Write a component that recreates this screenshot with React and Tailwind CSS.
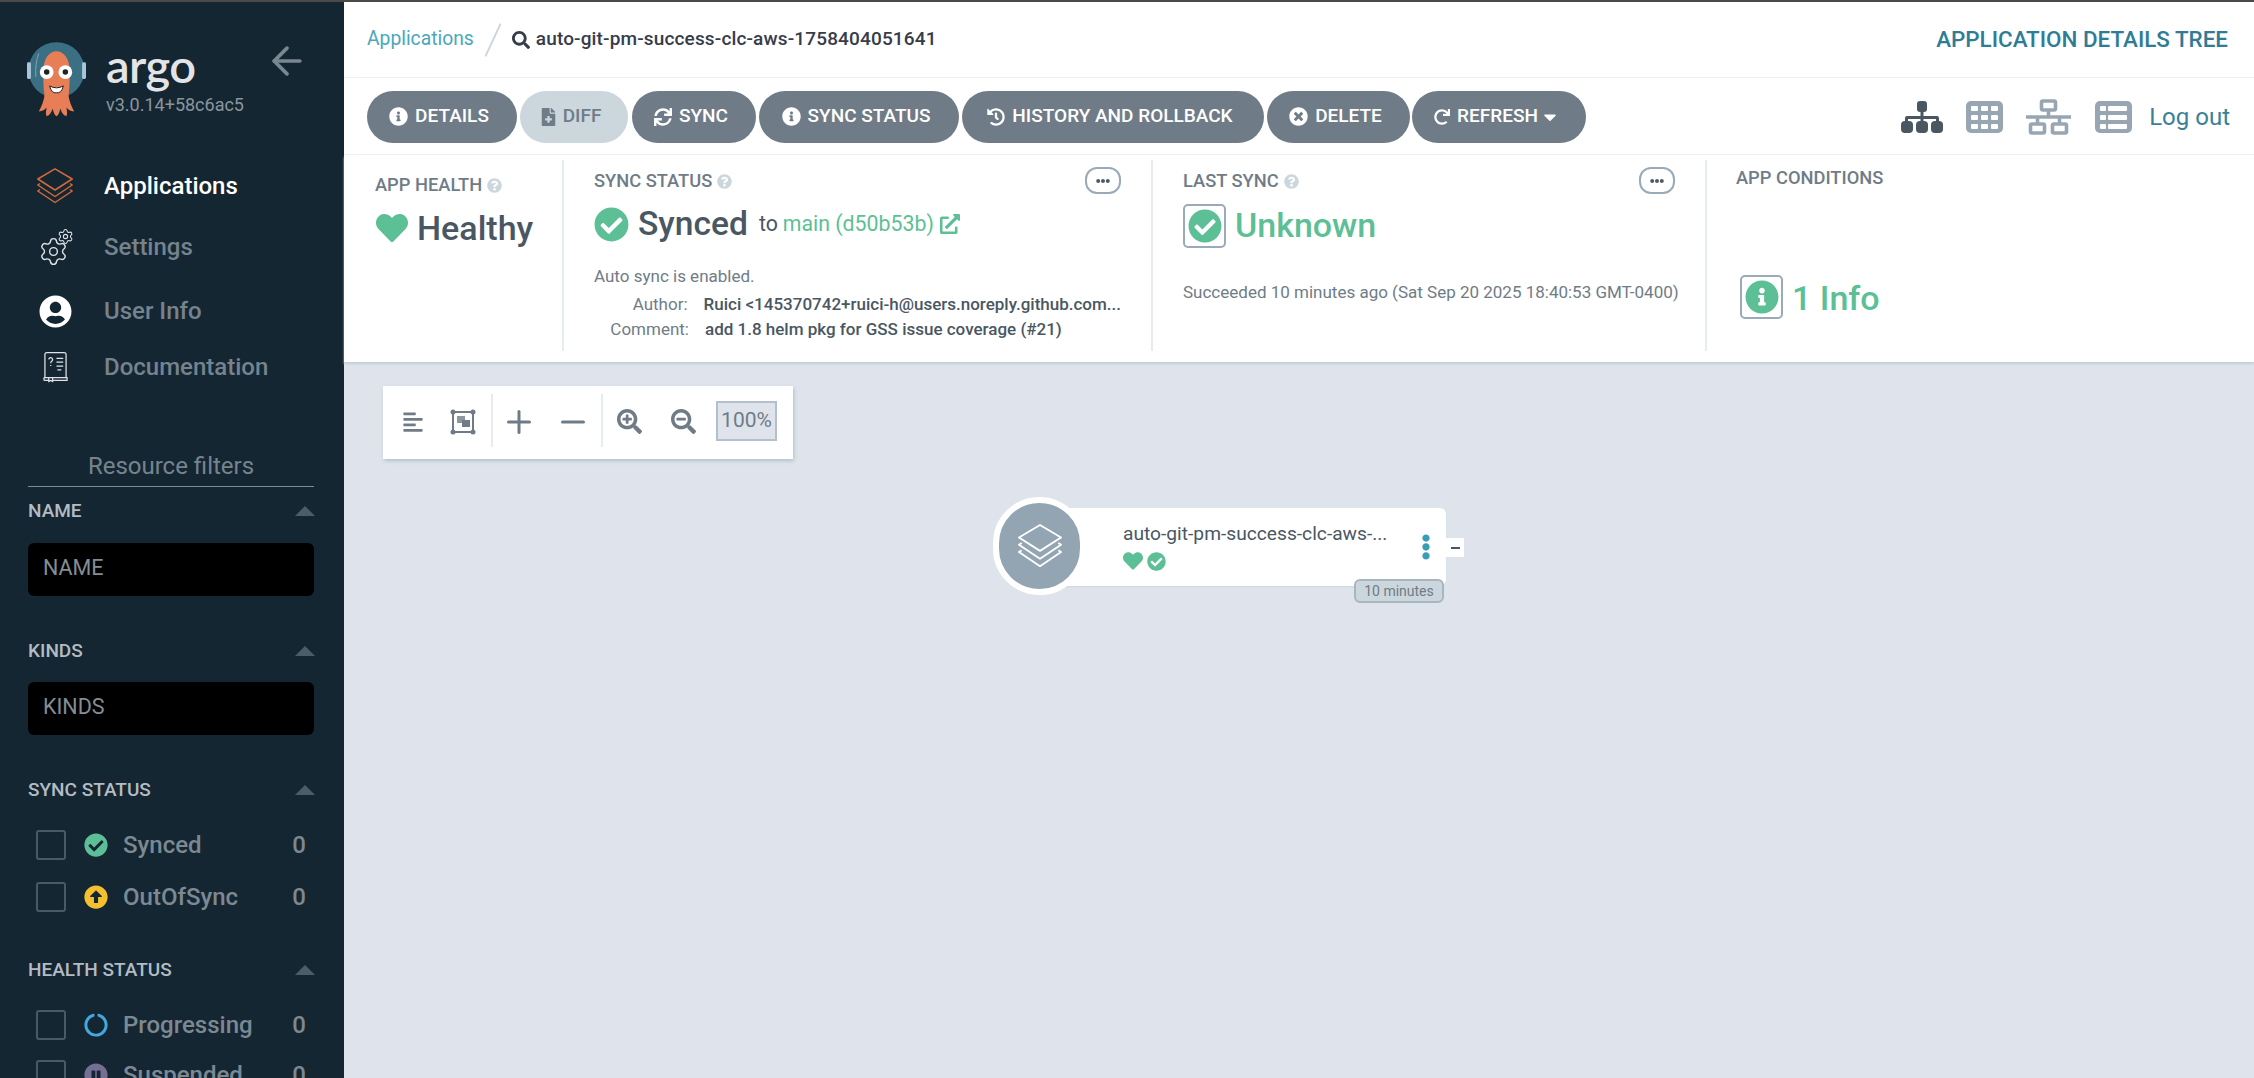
import React from 'react';
import { FaInfoCircle, FaFileMedical, FaSync, FaHistory, FaTimesCircle, FaRedo, FaCaretDown, FaSearch, FaExternalLinkAlt, FaHeart, FaCheckCircle, FaArrowAltCircleUp, FaPauseCircle, FaCircleNotch, FaUserCircle, FaEllipsisH, FaEllipsisV, FaQuestionCircle, FaSearchPlus, FaSearchMinus, FaAlignLeft } from 'react-icons/fa';
import { Settings, ArrowLeft, Plus, Minus } from 'lucide-react';

function Stack({ className, stroke }) {
  return (
    <svg viewBox="0 0 36 36" className={className} fill="none" stroke={stroke} strokeWidth="1.5" strokeLinejoin="round">
      <path d="M3 21.5 0.8 23 18 34.5 35.2 23 33 21.5" />
      <path d="M3 15.5 0.8 17 18 28.5 35.2 17 33 15.5" />
      <path d="M18 0.8 35.2 11 18 22 0.8 11Z" />
    </svg>
  );
}

function Logo() {
  return (
    <svg viewBox="0 0 60 76" className="w-[59px] h-[76px] shrink-0">
      <circle cx="30" cy="29" r="28.5" fill="#3b6f84" />
      <path d="M12 12Q8 22 9 36" fill="none" stroke="#7fa6b8" strokeWidth="1" />
      <rect x="0" y="21" width="4" height="17" rx="1.5" fill="#a9c6d8" />
      <rect x="56" y="21" width="4" height="17" rx="1.5" fill="#a9c6d8" />
      <path d="M16.5 30C16.5 3 43.5 3 43.5 30C43.5 42 43 50 42 56H18C17 50 16.5 42 16.5 30Z" fill="#e77e56" />
      <path d="M18 54C17 60 15 66 12 71C16 71 18 69 20 67C19 71 19 74 20 76C23 75 25 72 26 68C27 72 28 75 30 76C32 75 33 72 34 68C35 72 37 75 40 76C41 74 41 71 40 67C42 69 44 71 48 71C45 66 43 60 42 54Z" fill="#e77e56" />
      <circle cx="20" cy="31" r="7" fill="#fff" /><circle cx="39" cy="31" r="7" fill="#fff" />
      <circle cx="20" cy="31" r="2.8" fill="#222" /><circle cx="39" cy="31" r="2.8" fill="#222" />
      <path d="M23 45Q30 49 37 45Q35 53 30 52Q25 53 23 45Z" fill="#fff" stroke="#222" strokeWidth="1" />
    </svg>
  );
}

function BookIcon() {
  return (
    <svg viewBox="0 0 26 32" className="w-[25px] h-[32px]" fill="none" stroke="#dfe3e6" strokeWidth="1.3">
      <path d="M2 27V3a2 2 0 0 1 2-2h18a2 2 0 0 1 2 2v24" />
      <path d="M1 27h24v3H10M6 27v4l2-1 2 1v-4M6 30H2a1 1 0 0 1-1-1v-2" />
      <path d="M14 7h7M14 11h7M14 15h7M15 19h4" />
      <path d="M6 8a2 2 0 1 1 3 2c-1 .6-1 1-1 2M8 14v1" />
    </svg>
  );
}

function TreeIcon() {
  return (
    <svg viewBox="0 0 42 32" className="w-[42px] h-[32px]" fill="#495763">
      <rect x="16" y="0" width="10" height="11" rx="3" />
      <rect x="0" y="20" width="12" height="12" rx="4" />
      <rect x="15" y="20" width="12" height="12" rx="4" />
      <rect x="30" y="20" width="12" height="12" rx="4" />
      <path d="M19.5 10h3v5H36a2 2 0 0 1 2 2v4h-3v-3H22.5v3h-3v-3H7v3H4v-4a2 2 0 0 1 2-2h13.5z" />
    </svg>
  );
}

function GridIcon({ wide }) {
  const rows = [5, 14, 23];
  return (
    <svg viewBox="0 0 37 32" className="w-[37px] h-[32px]">
      <rect width="37" height="32" rx="5" fill="#98a6b3" />
      {rows.map((y) => wide ? (
        <g key={y} fill="#fff"><rect x="5" y={y} width="6" height="5" rx="1" /><rect x="13" y={y} width="19" height="5" rx="1" /></g>
      ) : (
        <g key={y} fill="#fff"><rect x="5" y={y} width="7" height="5" rx="1" /><rect x="15" y={y} width="7" height="5" rx="1" /><rect x="25" y={y} width="7" height="5" rx="1" /></g>
      ))}
    </svg>
  );
}

function NetIcon() {
  return (
    <svg viewBox="0 0 45 36" className="w-[45px] h-[36px]" fill="none" stroke="#98a6b3" strokeWidth="3.6" strokeLinejoin="round">
      <rect x="15.5" y="2" width="14" height="9" rx="1.5" />
      <rect x="4.5" y="25" width="14" height="9" rx="1.5" />
      <rect x="26.5" y="25" width="14" height="9" rx="1.5" />
      <path d="M22.5 11v7M0 18h45M11.5 18v7M33.5 18v7" />
    </svg>
  );
}

function Nav({ icon, label, active, className }) {
  return (
    <div className={`flex items-center h-[40px] ${className}`}>
      <div className="w-[36px] ml-[37px] mr-[31px] flex justify-center shrink-0">{icon}</div>
      <span className={`text-[24px] font-medium ${active ? 'text-white' : 'text-[#75838e]'}`}>{label}</span>
    </div>
  );
}

function FilterHead({ label, className }) {
  return (
    <div className={`flex items-center justify-between h-[20px] ${className}`}>
      <span className="text-[19px] font-medium text-[#b3bcc3] whitespace-nowrap">{label}</span>
      <span className="w-0 h-0 border-x-[10px] border-x-transparent border-b-[10px] border-b-[#4d5c69] mr-[-1px]" />
    </div>
  );
}

function FilterInput({ label, className }) {
  return (
    <div className={`h-[53px] rounded-[6px] bg-black flex items-center px-[15px] pb-[2px] text-[21.5px] text-[#848d93] ${className}`}>{label}</div>
  );
}

function FilterRow({ icon, label, className }) {
  return (
    <div className={`flex items-center h-[30px] pl-[8px] ${className}`}>
      <span className="w-[30px] h-[30px] rounded-[3px] border-2 border-[#4a5965] shrink-0" />
      <span className="w-[24px] ml-[18px] mr-[15px] flex justify-center shrink-0">{icon}</span>
      <span className="text-[24px] font-medium text-[#7c8992] grow whitespace-nowrap">{label}</span>
      <span className="text-[24px] font-medium text-[#7c8992] mr-[8px]">0</span>
    </div>
  );
}

function Btn({ icon, label, disabled, className, after }) {
  return (
    <div className={`h-[52px] rounded-[26px] flex items-center justify-center gap-[7px] pr-[6px] text-[19px] font-medium whitespace-nowrap ${disabled ? 'bg-[#ccd6dd] text-[#6f7c87]' : 'bg-[#6f7c87] text-white'} ${className}`}>
      {icon}<span>{label}</span>{after}
    </div>
  );
}

function More() {
  return (
    <div className="w-[36px] h-[27px] rounded-[12px] border-2 border-[#9aaab8] flex items-center justify-center text-[#4f5b66]">
      <FaEllipsisH className="w-[14px] h-[14px]" />
    </div>
  );
}

function Label({ children, help, className }) {
  return (
    <div className={`flex items-center h-[20px] gap-[5px] text-[18.3px] font-medium text-[#6f7c87] whitespace-nowrap ${className}`}>
      <span>{children}</span>
      {help && <FaQuestionCircle className="w-[15px] h-[15px] text-[#ccd6dd]" />}
    </div>
  );
}

const green = '#5cbf95';

export default function App() {
  return (
    <div className="w-[2254px] h-[1078px] overflow-hidden font-[Roboto,sans-serif] flex flex-col bg-white">
      <div className="h-[2px] bg-[#4a4a4a] shrink-0" />
      <div className="flex grow min-h-0">
        <aside className="w-[344px] shrink-0 bg-[#152633] px-0 overflow-hidden">
          <div className="flex h-[90px] mt-[39px] pl-[27px]">
            <Logo />
            <div className="ml-[20px] w-[150px]">
              <div className="text-[47px] leading-[48px] font-semibold font-[Lato,sans-serif] text-[#e2e4e6] h-[52px] tracking-[-0.5px]">argo</div>
              <div className="text-[18px] leading-[20px] text-[#8a959d] mt-[2px] whitespace-nowrap">v3.0.14+58c6ac5</div>
            </div>
            <ArrowLeft className="w-[44px] h-[44px] text-[#7a8791] ml-[9px] mt-[-2px] shrink-0" strokeWidth={2} />
          </div>
          <Nav className="mt-[35px]" active label="Applications" icon={<Stack className="w-[36px] h-[36px]" stroke="#d2693b" />} />
          <Nav className="mt-[21px]" label="Settings" icon={
            <span className="relative w-[34px] h-[34px] block">
              <Settings className="absolute left-[0px] bottom-[-3px] w-[31px] h-[31px] text-[#dfe3e6]" strokeWidth={1.1} />
              <Settings className="absolute right-[-2px] top-[-2px] w-[17px] h-[17px] text-[#dfe3e6]" strokeWidth={1.5} />
            </span>} />
          <Nav className="mt-[24px]" label="User Info" icon={<FaUserCircle className="w-[33px] h-[33px] text-white" />} />
          <Nav className="mt-[16px]" label="Documentation" icon={<BookIcon />} />
          <div className="ml-[28px] mr-[30px] mt-[59px]">
            <div className="h-[41px] flex items-center justify-center text-[24px] text-[#76848e] border-b border-[#7d8a94]">Resource filters</div>
            <FilterHead className="mt-[14px]" label="NAME" />
            <FilterInput className="mt-[22px]" label="NAME" />
            <FilterHead className="mt-[45px]" label="KINDS" />
            <FilterInput className="mt-[21px]" label="KINDS" />
            <FilterHead className="mt-[45px]" label="SYNC STATUS" />
            <FilterRow className="mt-[30px]" label="Synced" icon={
              <span className="relative block w-[24px] h-[24px]"><span className="absolute inset-[5px] bg-[#152633]" /><FaCheckCircle className="relative w-[24px] h-[24px]" color={green} /></span>} />
            <FilterRow className="mt-[22px]" label="OutOfSync" icon={<FaArrowAltCircleUp className="w-[24px] h-[24px] text-[#f4c030]" />} />
            <FilterHead className="mt-[48px]" label="HEALTH STATUS" />
            <FilterRow className="mt-[30px]" label="Progressing" icon={<FaCircleNotch className="w-[24px] h-[24px] text-[#3fa9e0]" />} />
            <FilterRow className="mt-[20px]" label="Suspended" icon={<FaPauseCircle className="w-[24px] h-[24px] text-[#766f94]" />} />
          </div>
        </aside>

        <main className="grow min-w-0 flex flex-col">
          <header className="h-[76px] shrink-0 border-b border-[#eff1f4] flex items-center pl-[23px] pr-[26px]">
            <span className="text-[19.3px] text-[#49a8bc]">Applications</span>
            <span className="w-[2px] h-[36px] bg-[#ccd6dd] rotate-[25deg] mx-[18px]" />
            <FaSearch className="w-[18px] h-[18px] text-[#363c4a]" />
            <span className="ml-[6px] text-[19px] font-medium text-[#363c4a] tracking-[0.15px]">auto-git-pm-success-clc-aws-1758404051641</span>
            <span className="ml-auto text-[22.4px] font-medium text-[#2f7c96]">APPLICATION DETAILS TREE</span>
          </header>

          <div className="h-[77px] shrink-0 border-b border-[#eff1f4] flex items-center pl-[23px] pr-[24px] pt-[1px]">
            <Btn className="w-[150px]" label="DETAILS" icon={<FaInfoCircle className="w-[19px] h-[19px]" />} />
            <Btn className="w-[108px] ml-[3px]" disabled label="DIFF" icon={<FaFileMedical className="w-[15px] h-[18px]" />} />
            <Btn className="w-[124px] ml-[4px]" label="SYNC" icon={<FaSync className="w-[18px] h-[18px]" />} />
            <Btn className="w-[200px] ml-[3px]" label="SYNC STATUS" icon={<FaInfoCircle className="w-[19px] h-[19px]" />} />
            <Btn className="w-[302px] ml-[3px]" label="HISTORY AND ROLLBACK" icon={<FaHistory className="w-[18px] h-[18px]" />} />
            <Btn className="w-[143px] ml-[3px]" label="DELETE" icon={<FaTimesCircle className="w-[19px] h-[19px]" />} />
            <Btn className="w-[174px] ml-[2px]" label="REFRESH" icon={<FaRedo className="w-[16px] h-[16px]" />} after={<FaCaretDown className="w-[16px] h-[20px] ml-[-3px]" />} />
            <div className="ml-auto flex items-center">
              <TreeIcon />
              <span className="ml-[23px]"><GridIcon /></span>
              <span className="ml-[23px]"><NetIcon /></span>
              <span className="ml-[24px]"><GridIcon wide /></span>
              <span className="text-[24px] text-[#3a8099] ml-[17px]">Log out</span>
            </div>
          </div>

          <section className="h-[207px] shrink-0 bg-white flex py-[5px] pb-[11px] relative z-10 shadow-[0_2px_2px_#c5cdd6]">
            <div className="w-[220px] shrink-0 border-r-2 border-[#e6ecf1] pl-[31px]">
              <Label help className="mt-[15px]">APP HEALTH</Label>
              <div className="flex items-center h-[40px] mt-[13px] gap-[8px]">
                <FaHeart className="w-[34px] h-[32px]" color={green} />
                <span className="text-[34px] font-medium text-[#495763] whitespace-nowrap">Healthy</span>
              </div>
            </div>

            <div className="w-[589px] shrink-0 border-r-2 border-[#e6ecf1] pl-[30px] pr-[30px]">
              <div className="flex justify-between mt-[7px] h-[27px]">
                <Label help className="mt-[4px]">SYNC STATUS</Label>
                <More />
              </div>
              <div className="flex items-center h-[40px] mt-[10px]">
                <FaCheckCircle className="w-[35px] h-[35px]" color={green} />
                <span className="text-[33.6px] font-medium text-[#495763] ml-[9px]">Synced</span>
                <span className="text-[21.3px] text-[#495763] ml-[11px]">to</span>
                <span className="text-[21.3px] ml-[5px]" style={{ color: green }}>main (d50b53b)</span>
                <FaExternalLinkAlt className="w-[20px] h-[20px] ml-[6px]" color={green} />
              </div>
              <div className="h-[20px] mt-[22px] text-[17px] leading-[20px] text-[#6f7c87]">Auto sync is enabled.</div>
              <div className="flex h-[20px] mt-[8px] text-[17px] leading-[20px] whitespace-nowrap">
                <span className="w-[95px] text-right text-[#6f7c87]">Author:</span>
                <span className="ml-[16px] text-[#495763] font-medium">Ruici &lt;145370742+ruici-h@users.noreply.github.com...</span>
              </div>
              <div className="flex h-[20px] mt-[5px] text-[17px] leading-[20px] whitespace-nowrap">
                <span className="w-[95px] text-right text-[#6f7c87]">Comment:</span>
                <span className="ml-[16px] text-[#495763] font-medium">add 1.8 helm pkg for GSS issue coverage (#21)</span>
              </div>
            </div>

            <div className="w-[554px] shrink-0 border-r-2 border-[#e6ecf1] pl-[30px] pr-[30px]">
              <div className="flex justify-between mt-[7px] h-[27px]">
                <Label help className="mt-[4px]">LAST SYNC</Label>
                <More />
              </div>
              <div className="flex items-center mt-[10px] h-[44px]">
                <span className="w-[43px] h-[44px] rounded-[5px] border-2 border-[#9aaab8] flex items-center justify-center">
                  <FaCheckCircle className="w-[34px] h-[34px]" color={green} />
                </span>
                <span className="text-[34px] font-medium ml-[9px] mt-[-1px]" style={{ color: green }}>Unknown</span>
              </div>
              <div className="h-[20px] mt-[34px] text-[17px] leading-[20px] text-[#6f7c87] whitespace-nowrap">Succeeded 10 minutes ago (Sat Sep 20 2025 18:40:53 GMT-0400)</div>
            </div>

            <div className="grow pl-[29px]">
              <Label className="mt-[8px]">APP CONDITIONS</Label>
              <div className="flex items-center mt-[87px] h-[44px] ml-[4px]">
                <span className="w-[43px] h-[44px] rounded-[5px] border-2 border-[#9aaab8] flex items-center justify-center">
                  <FaInfoCircle className="w-[34px] h-[34px]" color={green} />
                </span>
                <span className="text-[34px] font-medium ml-[9px] mt-[2px]" style={{ color: green }}>1 Info</span>
              </div>
            </div>
          </section>

          <div className="grow relative bg-[#dfe4ec]">
            <div className="absolute left-[39px] top-[24px] w-[410px] h-[73px] bg-white shadow-[1px_2px_4px_#b4bfc9] text-[#6f7c87]">
              <FaAlignLeft className="w-[22px] h-[22px] absolute left-[19px] top-[25px]" />
              <svg viewBox="0 0 26 26" className="w-[26px] h-[26px] absolute left-[67px] top-[23px]" fill="currentColor">
                <rect x="3" y="3" width="20" height="20" fill="none" stroke="currentColor" strokeWidth="2" />
                <circle cx="3" cy="3" r="2.5" /><circle cx="23" cy="3" r="2.5" /><circle cx="3" cy="23" r="2.5" /><circle cx="23" cy="23" r="2.5" />
                <rect x="7" y="7" width="8" height="7" opacity="0.8" /><rect x="12" y="11" width="8" height="7" />
              </svg>
              <span className="absolute left-[108px] top-[8px] w-[2px] h-[53px] bg-[#e6ecf1]" />
              <Plus className="w-[36px] h-[36px] absolute left-[118px] top-[18px]" strokeWidth={2} />
              <Minus className="w-[36px] h-[36px] absolute left-[172px] top-[18px]" strokeWidth={2} />
              <span className="absolute left-[218px] top-[8px] w-[2px] h-[53px] bg-[#e6ecf1]" />
              <FaSearchPlus className="w-[25px] h-[25px] absolute left-[234px] top-[23px]" />
              <FaSearchMinus className="w-[25px] h-[25px] absolute left-[288px] top-[23px]" />
              <span className="absolute left-[333px] top-[15px] w-[61px] h-[40px] bg-[#dfe4ec] border-2 border-[#b3bfca] flex items-center justify-center text-[21px]">100%</span>
            </div>

            <div className="absolute left-[695px] top-[146px] w-[407px] h-[78px] rounded-[6px] bg-white shadow-[0_1px_2px_#ccd6dd]">
              <div className="absolute left-[84px] top-[15px] w-[275px] text-[19.2px] leading-[22px] text-[#495763] whitespace-nowrap">auto-git-pm-success-clc-aws-...</div>
              <div className="absolute left-[84px] top-[43px] flex gap-[4px] items-center">
                <FaHeart className="w-[20px] h-[20px]" color={green} />
                <FaCheckCircle className="w-[19px] h-[19px]" color={green} />
              </div>
              <FaEllipsisV className="absolute left-[375px] top-[26px] w-[24px] h-[26px] text-[#3a9cb5]" />
            </div>
            <div className="absolute left-[1102px] top-[176px] w-[18px] h-[19px] bg-white flex items-center justify-center">
              <span className="w-[9px] h-[2px] bg-[#495763]" />
            </div>
            <div className="absolute left-[649px] top-[135px] w-[93px] h-[98px] rounded-full bg-[#93a5b3] border-[6px] border-white flex items-center justify-center">
              <Stack className="w-[46px] h-[44px]" stroke="#fff" />
            </div>
            <div className="absolute left-[1010px] top-[217px] w-[90px] h-[24px] rounded-[6px] bg-[#ccd6dd] border-2 border-[#a8b6c1] flex items-center justify-center text-[14px] text-[#6f7c87] whitespace-nowrap">10 minutes</div>
          </div>
        </main>
      </div>
    </div>
  );
}
